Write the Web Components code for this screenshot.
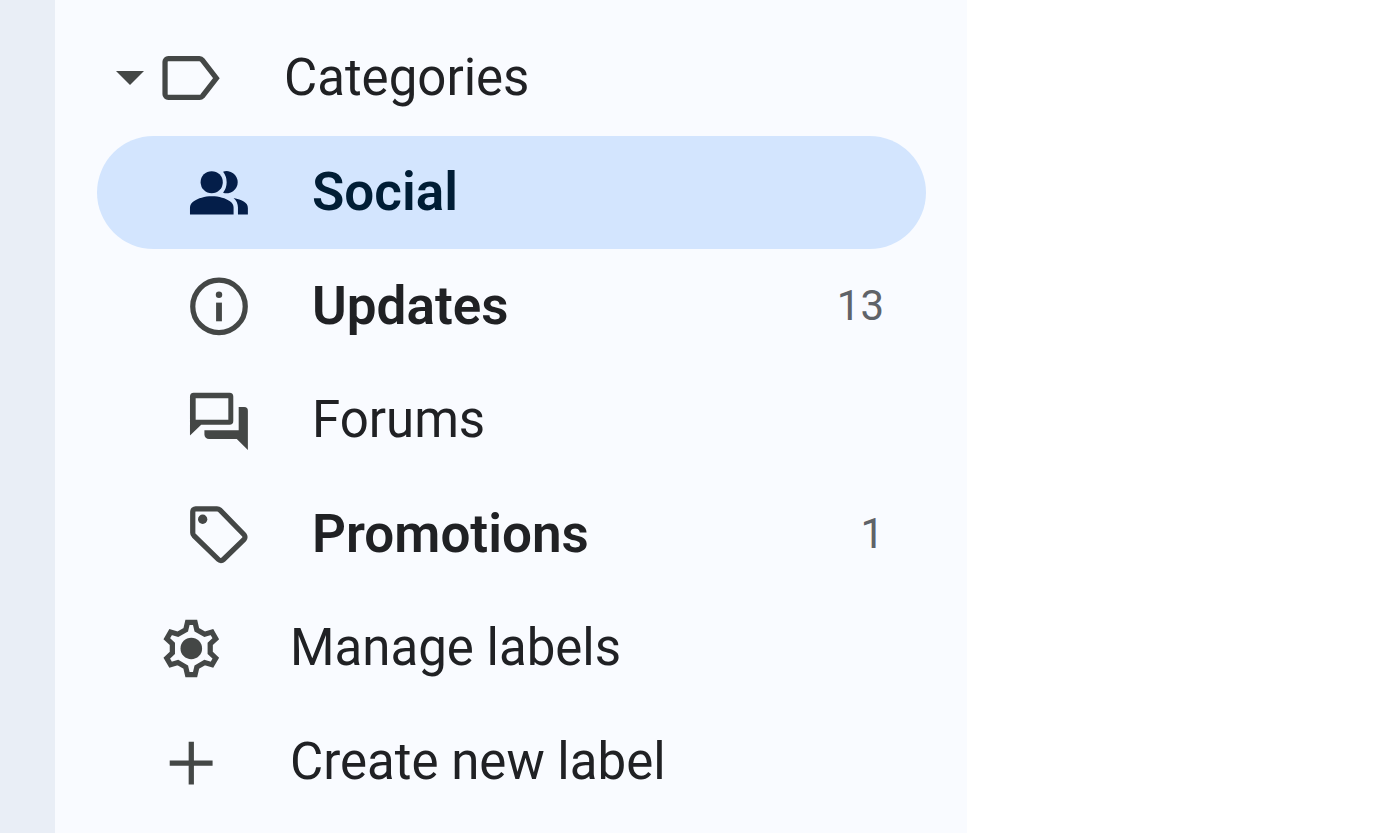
<!DOCTYPE html>
<html lang="en">
<head>
<meta charset="utf-8">
<meta name="viewport" content="width=device-width, initial-scale=1">
<title>Labels</title>
<style>
  body {
    margin: 0;
    background: #fff;
    color: #202124;
    font-family: Roboto, "Liberation Sans", sans-serif;
  }
</style>
</head>
<body>
<mail-shell>
  <label-nav>
    <label-item expandable>Categories
      <svg slot="icon" viewBox="0 0 24 24" aria-hidden="true"><path d="M4.2 5H14.9a1.3 1.3 0 0 1 1 .5L20.7 11.7 15.9 17.900a1.3 1.3 0 0 1-1 .4H4.2A1.1 1.1 0 0 1 3.1 17.200V6.100A1.1 1.1 0 0 1 4.2 5z" fill="none" stroke="currentColor" stroke-width="1.8"/></svg>
    </label-item>
    <label-item nested selected unread>Social
      <svg slot="icon" viewBox="0 0 24 24" aria-hidden="true"><circle cx="9.5" cy="8.3" r="3.8"/><path d="M13.4 4.7a3.8 3.8 0 1 1 0 7.2 5.9 5.9 0 0 0 0-7.2zM2.05 19.4V17c0-1 .5-1.7 1.3-2.2 1.5-1 3.7-1.7 6.2-1.7s4.7.7 6.2 1.7c.8.5 1.25 1.2 1.25 2.2v2.4zM18.5 19.4V17c0-1.3-.5-2.4-1.5-3.3 1.4.3 2.7.7 3.6 1.3.8.5 1.3 1.2 1.3 2.1v2.3z"/></svg>
    </label-item>
    <label-item nested unread count="13">Updates
      <svg slot="icon" viewBox="0 0 24 24" aria-hidden="true"><circle cx="12" cy="11.8" r="9" fill="none" stroke="currentColor" stroke-width="1.8"/><circle cx="12" cy="7.8" r="1.1"/><path d="M11 10.5h2v6.400h-2z"/></svg>
    </label-item>
    <label-item nested>Forums
      <svg slot="icon" viewBox="0 0 24 24" aria-hidden="true"><path fill-rule="evenodd" d="M3.3 2.3H15.6a1.3 1.3 0 0 1 1.3 1.3V12a1.3 1.3 0 0 1-1.3 1.3H5.9L2.05 17V3.6a1.3 1.3 0 0 1 1.25-1.3zM4 4.2v7.4h11.2V4.2z"/><path d="M18.75 7.2h1.9a1.25 1.25 0 0 1 1.25 1.25V21.9l-3.8-3.7H8.6A1.6 1.6 0 0 1 7 16.6V15.2h11.75z"/></svg>
    </label-item>
    <label-item nested unread count="1">Promotions
      <svg slot="icon" viewBox="0 0 24 24" aria-hidden="true"><path d="M4 3h7.3a1.5 1.5 0 0 1 1 .4L20.6 11.9a1.2 1.2 0 0 1 0 1.6L13.5 20.4a1.2 1.2 0 0 1-1.7 0L3.4 12.2a1.5 1.5 0 0 1-.4-1V4a1 1 0 0 1 1-1z" fill="none" stroke="currentColor" stroke-width="1.8"/><circle cx="6.4" cy="6.6" r="1.6"/></svg>
    </label-item>
    <label-item action>Manage labels
      <svg slot="icon" viewBox="0 0 24 24" aria-hidden="true"><g transform="translate(12.1 11.8)"><circle r="3.7"/><path d="M-1.9-6.4-1.3-8.95H1.3L1.9-6.4 4.59-4.85 7.1-5.6 8.4-3.35 6.49-1.55V1.55L8.4 3.35 7.1 5.6 4.59 4.85 1.9 6.4 1.3 8.95H-1.3L-1.9 6.4-4.59 4.85-7.1 5.6-8.4 3.35-6.49 1.55V-1.55L-8.4-3.35-7.1-5.6-4.59-4.85z" fill="none" stroke="currentColor" stroke-width="1.8"/></g></svg>
    </label-item>
    <label-item action>Create new label
      <svg slot="icon" viewBox="0 0 24 24" aria-hidden="true"><path d="M12.1 4.7v14.7M4.7 12h14.7" fill="none" stroke="currentColor" stroke-width="1.8"/></svg>
    </label-item>
  </label-nav>
</mail-shell>

<script>
// Page frame: a tinted rail, the label sidebar and the empty reading area
customElements.define(
  "mail-shell",
  class MailShell extends HTMLElement {
    constructor() {
      super();
      const template = document.createElement("template");
      template.innerHTML = `
      <style>
        :host {
          display: flex;
          min-height: 100vh;
        }
        .rail {
          flex: 0 0 55px;
          background: #e9eef6;
        }
        aside {
          flex: 0 1 912px;
          min-width: 0;
          background: #f9fbff;
        }
        main {
          flex: 1;
        }
      </style>
      <div class="rail"></div>
      <aside><slot></slot></aside>
      <main></main>
      `;
      this.attachShadow({ mode: "open" }).appendChild(
        template.content.cloneNode(true)
      );
    }
  }
);

customElements.define(
  "label-nav",
  class LabelNav extends HTMLElement {
    constructor() {
      super();
      const template = document.createElement("template");
      template.innerHTML = `
      <style>
        :host {
          display: block;
        }
        nav {
          display: flex;
          flex-direction: column;
          gap: 1px;
          padding: 22px 41px 12px 42px;
        }
      </style>
      <nav aria-label="Labels"><slot></slot></nav>
      `;
      this.attachShadow({ mode: "open" }).appendChild(
        template.content.cloneNode(true)
      );
    }
  }
);

// One row. "expandable" adds the arrow, "action" is for the rows under the list
customElements.define(
  "label-item",
  class LabelItem extends HTMLElement {
    constructor() {
      super();
      const template = document.createElement("template");
      template.innerHTML = `
      <style>
        :host {
          display: flex;
          align-items: center;
          box-sizing: border-box;
          min-height: 113px;
          padding: 0 42px 0 59px;
          border-radius: 57px;
        }
        :host([expandable]) {
          padding-left: 19px;
        }
        :host([nested]) {
          padding-left: 87px;
        }
        :host([selected]) {
          background: #d3e5fe;
          color: #001d35;
          --icon-color: #041e49;
        }
        button {
          display: flex;
          margin: 0 12px 0 0;
          padding: 0 0 2px;
          border: 0;
          background: none;
          color: #444746;
          cursor: pointer;
        }
        button[hidden] {
          display: none;
        }
        .is-collapsed svg {
          transform: rotate(-90deg);
        }
        svg {
          fill: currentColor;
        }
        a {
          flex: 1;
          display: flex;
          align-items: center;
          gap: 58px;
          min-width: 0;
          color: inherit;
          text-decoration: none;
        }
        :host([action]) a {
          gap: 64px;
        }
        ::slotted(svg) {
          flex: none;
          width: 70px;
          height: 70px;
          color: var(--icon-color, #444746);
          fill: currentColor;
        }
        .label {
          flex: 1;
          padding-bottom: 2px;
          font-size: 51px;
          line-height: 60px;
          white-space: nowrap;
        }
        :host([unread]) .label {
          font-size: 53px;
          font-weight: 600;
        }
        .count {
          padding-bottom: 2px;
          color: #5f6368;
          font-size: 42px;
          line-height: 60px;
        }
      </style>
      <button type="button" aria-label="Toggle categories" aria-expanded="true" hidden>
        <svg viewBox="0 0 28 14" width="28" height="14" aria-hidden="true">
          <path d="M0 0h28L14 14z"></path>
        </svg>
      </button>
      <a href="#">
        <slot name="icon"></slot>
        <span class="label"><slot></slot></span>
        <span class="count"></span>
      </a>
      `;
      this.attachShadow({ mode: "open" }).appendChild(
        template.content.cloneNode(true)
      );
      this.isOpen = true;
      this.toggle = this.toggle.bind(this);
    }
    connectedCallback() {
      const button = this.shadowRoot.querySelector("button");
      button.hidden = !this.hasAttribute("expandable");
      button.addEventListener("click", this.toggle);
      this.shadowRoot.querySelector(".count").textContent =
        this.getAttribute("count") ?? "";
      if (this.hasAttribute("selected")) {
        this.shadowRoot.querySelector("a").setAttribute("aria-current", "page");
      }
    }
    toggle() {
      const button = this.shadowRoot.querySelector("button");
      this.isOpen = !this.isOpen;
      button.setAttribute("aria-expanded", this.isOpen);
      button.classList.toggle("is-collapsed", !this.isOpen);
      this.parentElement.querySelectorAll("[nested]").forEach((item) => {
        item.style.display = this.isOpen ? "" : "none";
      });
    }
  }
);
</script>
</body>
</html>
